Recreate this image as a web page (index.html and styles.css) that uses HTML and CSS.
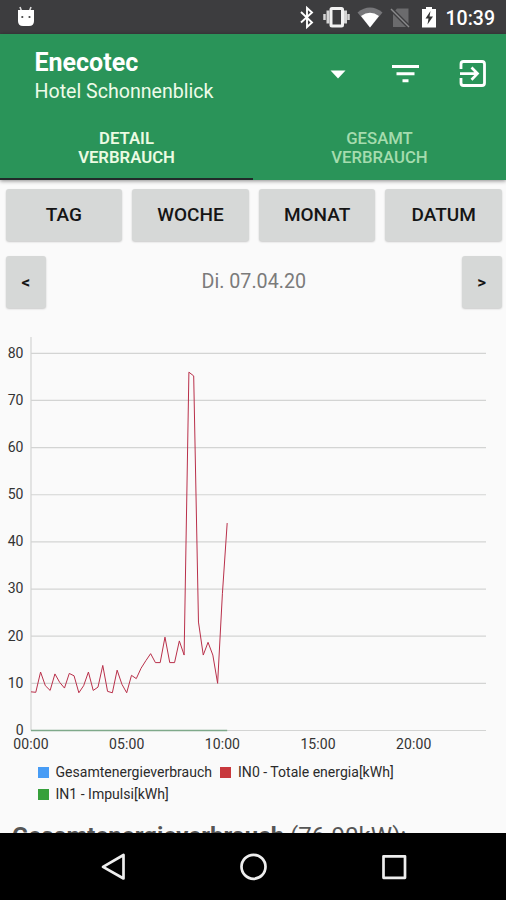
FILE: index.html
```html
<!DOCTYPE html>
<html lang="de">
<head>
    <meta charset="UTF-8">
    <meta name="viewport" content="width=device-width, initial-scale=1.0">
    <title>Enecotec</title>
    <link rel="stylesheet" href="styles.css">
</head>
<body>
    <div class="statusbar">
        <svg class="status-icons" width="506" height="34" viewBox="0 0 506 34">
            <!-- notification -->
            <path d="M20 7l1.5 4M31 7l-1.5 4" stroke="#ddd" stroke-width="1.6"/>
            <path d="M18 10h16v11q0 5-5 5h-6q-5 0-5-5z" fill="#fff"/>
            <circle cx="22.3" cy="17" r="1.1" fill="#444"/>
            <circle cx="29.5" cy="17" r="1.1" fill="#444"/>
            <!-- bluetooth -->
            <path d="M301 12l11 10.500-5 4.500V8l5 4.500-11 10" fill="none" stroke="#fff" stroke-width="1.9"/>
            <!-- vibrate -->
            <rect x="331" y="8.500" width="11.500" height="17.500" rx="1" fill="none" stroke="#f2f2f2" stroke-width="3"/>
            <path d="M328 10.500v13M345.500 10.500v13" stroke="#d5d5d5" stroke-width="3"/>
            <path d="M324.500 14v6M348.500 14v6" stroke="#d5d5d5" stroke-width="2.500"/>
            <!-- wifi -->
            <path d="M357.500 12.500q12.500-10 25 0L370 27.500z" fill="#77777a"/>
            <path d="M361 16q9-6.500 18 0l-9 11.500z" fill="#fff"/>
            <!-- no sim -->
            <path d="M397 8.500h11.500V27H393V13z" fill="#6b6b6d"/>
            <path d="M391 9l18 18" stroke="#3d3d3f" stroke-width="4"/>
            <path d="M391 9l18 18" stroke="#8a8a8c" stroke-width="1.5"/>
            <!-- battery -->
            <path d="M426 7h6v2h4v18.500h-14V9h4z" fill="#fff"/>
            <path d="M430.500 11l-5 7.500h3l-1 6 5.500-8h-3.500z" fill="#333"/>
        </svg>
        <span class="clock">10:39</span>
    </div>

    <header class="header">
        <div class="toolbar">
            <div class="titles">
                <h1>Enecotec</h1>
                <p>Hotel Schonnenblick</p>
            </div>
            <svg class="actions" width="170" height="40" viewBox="325 54 170 40">
                <path d="M330.500 70.500h15l-7.500 8z" fill="#fff"/>
                <path d="M392 66.500h27M396.500 73.700h18M402.500 80.800h6" stroke="#fff" stroke-width="3"/>
                <path d="M461 69v-5q0-2.500 2.500-2.500h18.500q2.500 0 2.500 2.500v19q0 2.500-2.500 2.500h-18.500q-2.500 0-2.500-2.500v-5" fill="none" stroke="#fff" stroke-width="2.800"/>
                <path d="M460 73.600h17M471.500 67.500l6 6.100-6 6.100" fill="none" stroke="#fff" stroke-width="2.700"/>
            </svg>
        </div>
        <nav class="tabs">
            <div class="tab active">DETAIL<br>VERBRAUCH</div>
            <div class="tab">GESAMT<br>VERBRAUCH</div>
        </nav>
    </header>

    <main class="content">
        <div class="periods">
            <button class="btn">TAG</button>
            <button class="btn">WOCHE</button>
            <button class="btn">MONAT</button>
            <button class="btn">DATUM</button>
        </div>

        <div class="date-row">
            <button class="btn arrow">&lt;</button>
            <span class="date">Di. 07.04.20</span>
            <button class="btn arrow">&gt;</button>
        </div>

        <svg class="chart" id="chart" width="506" height="430" viewBox="0 325 506 430"></svg>

        <div class="legend">
            <div class="legend-item"><span class="swatch blue"></span><span>Gesamtenergieverbrauch</span></div>
            <div class="legend-item"><span class="swatch red"></span><span>IN0 - Totale energia[kWh]</span></div>
            <div class="legend-item"><span class="swatch green"></span><span>IN1 - Impulsi[kWh]</span></div>
        </div>

        <p class="summary"><b>Gesamtenergieverbrauch</b> (76.90kW):</p>
    </main>

    <footer class="navbar">
        <svg width="506" height="67" viewBox="0 833 506 67" fill="none" stroke="#eee" stroke-width="2.700" stroke-linejoin="round">
            <path d="M123.500 855v23.500l-20.500-11.700z"/>
            <circle cx="253.500" cy="866.800" r="12"/>
            <rect x="383.500" y="856.300" width="21.500" height="21.500"/>
        </svg>
    </footer>

    <script>
        // kWh per quarter of an hour, starting at 00:00
        const values = [8.2, 8.1, 12.4, 9.5, 8.5, 12, 10.2, 9, 12.1, 11.6, 8, 9.5, 12.4, 8.5, 9.2,
            13.8, 8.3, 8, 12.8, 9.8, 8, 11.7, 11, 13.2, 14.8, 16.3, 14.4, 14.4, 19.8, 14.4, 14.4,
            19, 16, 76, 75.2, 23, 16, 18.7, 16, 10, 29, 44];
        const left = 31, right = 486, bottom = 730.5;
        const toX = i => left + i * 4.785;
        const toY = v => bottom - v * 4.715;

        let out = '';
        for (let v = 0; v <= 80; v += 10) {
            out += `<line class="grid" x1="${left}" x2="${right}" y1="${toY(v)}" y2="${toY(v)}"/>`;
            out += `<text class="axis" x="23.5" y="${toY(v) + 4.3}" text-anchor="end">${v}</text>`;
        }
        out += `<line class="grid" x1="${left}" x2="${left}" y1="337" y2="${bottom}"/>`;
        ['00:00', '05:00', '10:00', '15:00', '20:00'].forEach((label, i) => {
            out += `<text class="axis time" x="${toX(i * 20)}" y="749.3" text-anchor="middle">${label}</text>`;
        });
        out += `<line class="line-in1" x1="${left}" x2="${toX(41)}" y1="${bottom}" y2="${bottom}"/>`;
        out += `<polyline class="line-in0" points="${values.map((v, i) => toX(i) + ',' + toY(v)).join(' ')}"/>`;
        document.getElementById('chart').innerHTML = out;
    </script>
</body>
</html>
```
FILE: styles.css
```css
* {
    margin: 0;
    padding: 0;
    box-sizing: border-box;
    font-family: Roboto, sans-serif;
}

body {
    width: 506px;
    height: 900px;
    display: flex;
    flex-direction: column;
    overflow: hidden;
    background: #fafafa;
}

svg {
    display: block;
    flex-shrink: 0;
}

.statusbar {
    display: grid;
    height: 34px;
    flex-shrink: 0;
    background: #3d3d3f;
}

.status-icons,
.clock {
    grid-area: 1 / 1;
}

.clock {
    justify-self: end;
    padding: 7px 11px 0 0;
    font-size: 19.5px;
    line-height: 24px;
    font-weight: 500;
    color: #fff;
}

.header {
    height: 146px;
    flex-shrink: 0;
    display: flex;
    flex-direction: column;
    background: #2a9459;
    color: #fff;
    box-shadow: 0 1px 4px rgba(0, 0, 0, 0.45);
    z-index: 1;
}

.toolbar {
    height: 86px;
    display: flex;
    justify-content: space-between;
    padding: 14px 11px 0 34.5px;
}

.actions {
    margin-top: 6px;
}

.titles h1 {
    font-size: 25px;
    line-height: 29px;
    font-weight: 700;
}

.titles p {
    font-size: 19.6px;
    line-height: 30px;
    color: #eefbe9;
}

.tabs {
    flex: 1;
    display: flex;
}

.tab {
    flex: 1;
    padding-top: 9px;
    text-align: center;
    font-size: 16.7px;
    line-height: 19px;
    font-weight: 500;
    color: #a5dcae;
}

.tab.active {
    color: #ebfbe2;
    font-weight: 600;
    border-bottom: 2px solid #212b2a;
}

.content {
    flex: 1;
    min-height: 0;
    overflow: hidden;
}

.periods {
    display: flex;
    gap: 10px;
    padding: 8.5px 4px 0 5.5px;
}

.btn {
    flex: 1;
    height: 52px;
    border: none;
    border-radius: 3px;
    background: #d6d8d7;
    box-shadow: 0 1px 2px rgba(0, 0, 0, 0.2);
    color: #151515;
    font-size: 19px;
    font-weight: 500;
}

.date-row {
    display: flex;
    justify-content: space-between;
    align-items: center;
    padding: 15px 4px 0 5.5px;
}

.arrow {
    flex: none;
    width: 40.5px;
    font-size: 17px;
    font-weight: 700;
}

.date {
    font-size: 19.7px;
    color: #7b7b7b;
}

.chart {
    margin-top: 17.5px;
}

.grid {
    stroke: #d3d4d3;
    stroke-width: 1.2;
}

.axis {
    font-size: 14px;
    fill: #333;
}

.axis.time {
    letter-spacing: 0.1px;
}

.line-in0 {
    fill: none;
    stroke: #b9304a;
    stroke-width: 1;
}

.line-in1 {
    stroke: #7fa98a;
    stroke-width: 1.3;
}

.legend {
    display: flex;
    flex-wrap: wrap;
    column-gap: 8px;
    padding: 6px 60px 0 37.5px;
}

.legend-item {
    display: flex;
    align-items: center;
    gap: 7px;
    height: 22px;
    font-size: 14.05px;
    color: #2b2b2b;
}

.swatch {
    width: 11px;
    height: 11px;
}

.swatch.blue {
    background: #479cf5;
}

.swatch.red {
    background: #c8383d;
}

.swatch.green {
    background: #36a03b;
}

.summary {
    padding-left: 12px;
    margin-top: 16px;
    font-size: 24px;
    line-height: 30px;
    white-space: nowrap;
    color: #555;
}

.navbar {
    height: 67px;
    flex-shrink: 0;
    background: #000;
}
```
